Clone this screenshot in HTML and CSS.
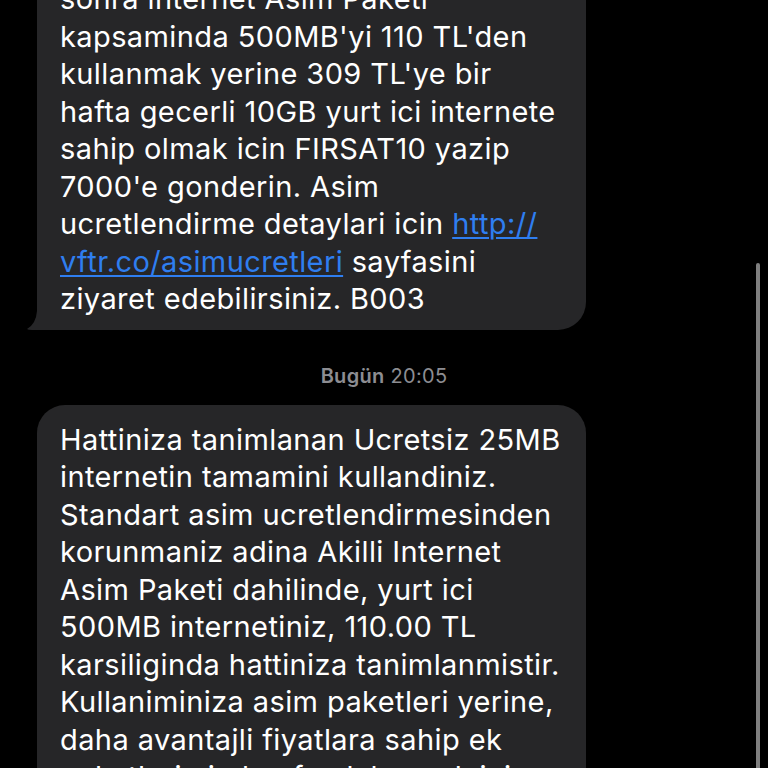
FILE: index.html
```html
<!DOCTYPE html>
<html lang="tr">
<head>
  <meta charset="utf-8">
  <meta name="viewport" content="width=device-width, initial-scale=1.0">
  <title>Mesajlar</title>
  <link rel="stylesheet" href="styles.css">
</head>
<body>

  <div class="thread">
    <div class="bubble bubble-first">
      sonra internet Asim Paketi<br>
      kapsaminda 500MB'yi 110 TL'den<br>
      kullanmak yerine 309 TL'ye bir<br>
      hafta gecerli 10GB yurt ici internete<br>
      sahip olmak icin FIRSAT10 yazip<br>
      7000'e gonderin. Asim<br>
      ucretlendirme detaylari icin <a href="#">http://<br>vftr.co/asimucretleri</a> sayfasini<br>
      ziyaret edebilirsiniz. B003
      <svg class="tail" width="30" height="24" viewBox="0 0 30 24">
        <path d="M10 0 L30 0 L30 24 L5 24 Q1 24 0 23 Q9 18 10 5 Z" fill="#262628"/>
      </svg>
    </div>

    <div class="stamp"><b>Bugün</b> 20:05</div>

    <div class="bubble">
      Hattiniza tanimlanan Ucretsiz 25MB<br>
      internetin tamamini kullandiniz.<br>
      Standart asim ucretlendirmesinden<br>
      korunmaniz adina Akilli Internet<br>
      Asim Paketi dahilinde, yurt ici<br>
      500MB internetiniz, 110.00 TL<br>
      karsiliginda hattiniza tanimlanmistir.<br>
      Kullaniminiza asim paketleri yerine,<br>
      daha avantajli fiyatlara sahip ek<br>
      paketlerimizden faydalanmak icin
    </div>

    <div class="scrollbar"></div>
  </div>

</body>
</html>
```

FILE: styles.css
```css
html, body {
  margin: 0;
  background-color: #000;
}
.thread {
  position: relative;
  height: 768px;
  overflow: hidden;
  font-family: Inter, "Liberation Sans", sans-serif;
}

.bubble {
  position: relative;
  width: 549px;
  box-sizing: border-box;
  margin-left: 37px;
  padding: 16px 20px 12px 23px;
  background-color: #262628;
  border-radius: 28px;
  color: #fff;
  font-size: 29px;
  line-height: 37.5px;
  letter-spacing: 0.4px;
  white-space: nowrap;
}
.bubble-first { margin-top: -36px; border-bottom-left-radius: 8px; }
.bubble a { color: #2f7ef0; text-decoration: underline; text-underline-offset: 3px; text-decoration-thickness: 2px; }

/* staartje links onder */
.tail { position: absolute; left: -10px; bottom: 0; }

.stamp {
  margin: 35px 0 18px;
  text-align: center;
  color: #8d8d92;
  font-size: 20px;
  line-height: 22px;
  letter-spacing: 0.3px;
}
.stamp b { font-weight: 600; }

.scrollbar {
  position: absolute;
  right: 8px;
  top: 263px;
  width: 4px;
  height: 520px;
  border-radius: 2px;
  background-color: #7f7f7f;
}
```
